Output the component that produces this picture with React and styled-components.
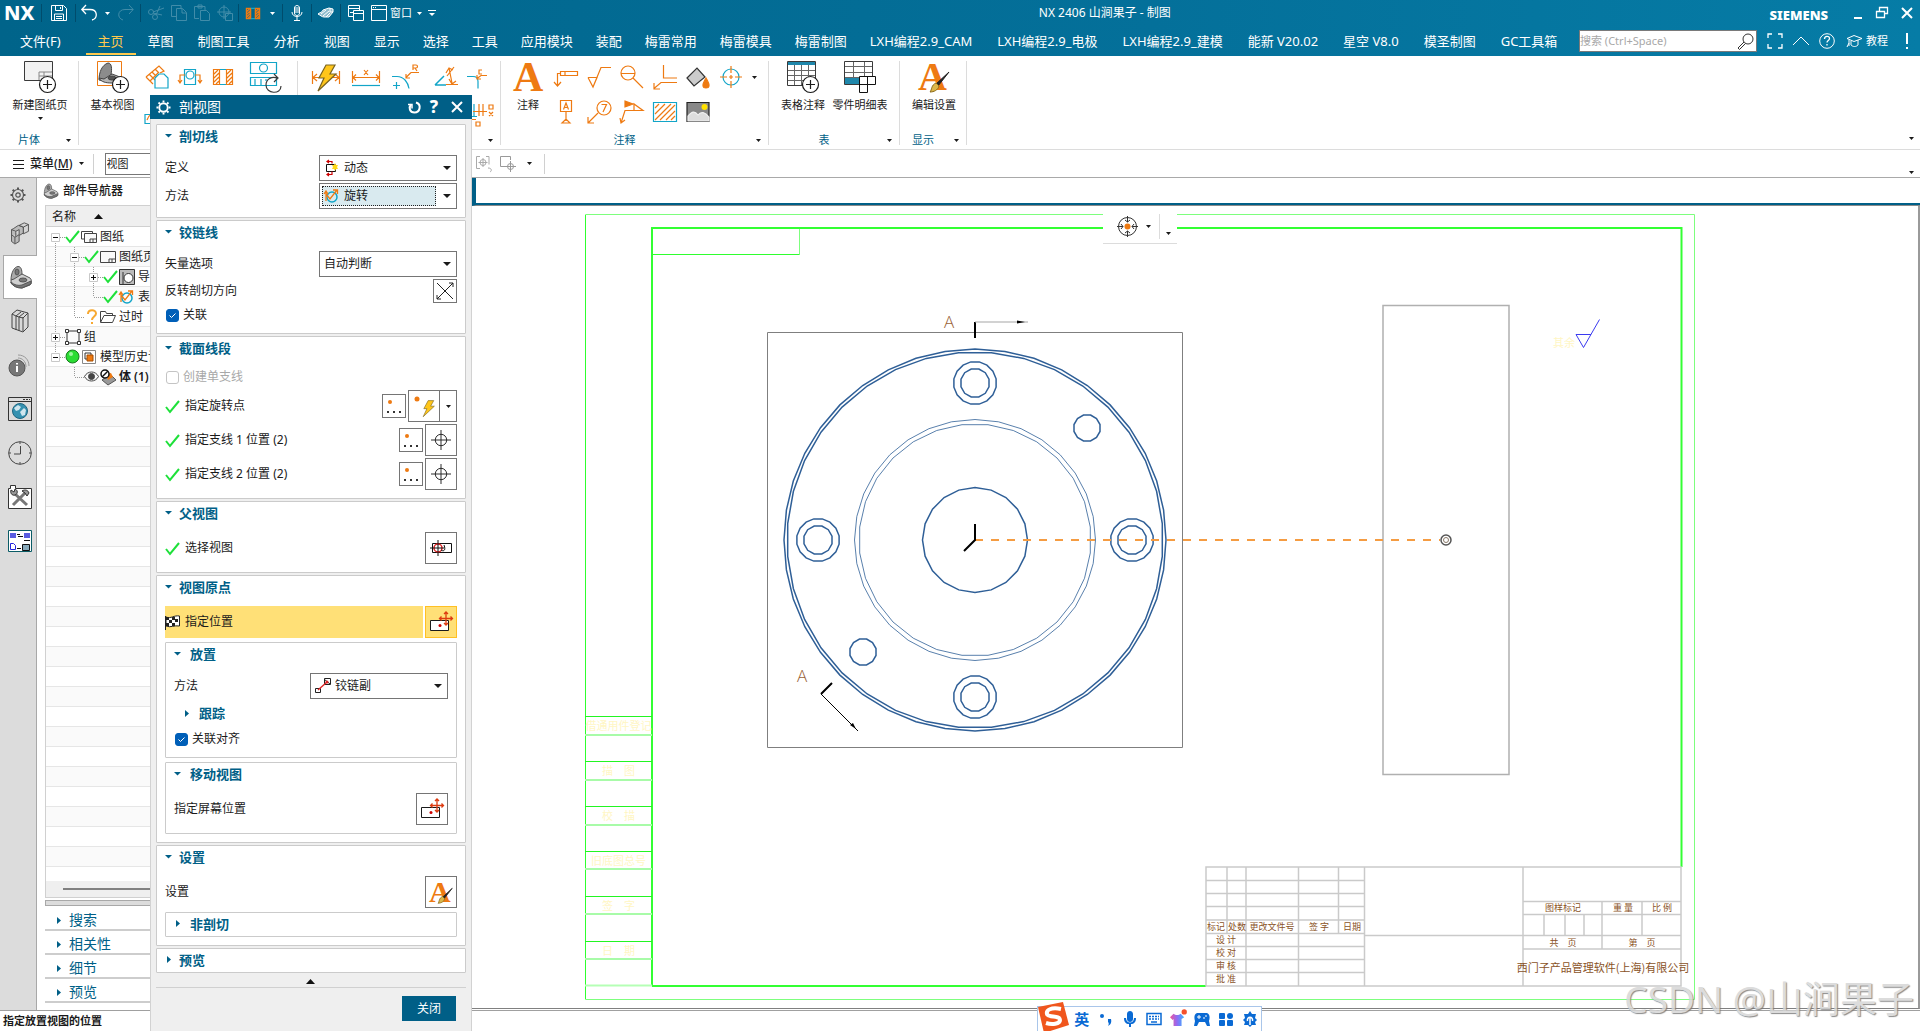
import React, { useState } from 'react';
import styled, { createGlobalStyle } from 'styled-components';

const BLUE = '#005f87';
const ORANGE = '#ee7a12';
const CYAN = '#12a5c8';
const DARK = '#3a3a3a';

const GlobalStyle = createGlobalStyle`
  * {
    box-sizing: border-box;
  }

  body {
    margin: 0;
    overflow: hidden;
    background: #fff;
    color: #1a1a1a;
    font-family: 'Noto Sans', 'Noto Sans CJK SC', sans-serif;
    font-size: 12px;
    line-height: 16px;
  }

  button, input, select {
    font: inherit;
    color: inherit;
  }

  svg {
    display: block;
    flex: none;
    overflow: visible;
  }
`;

const Page = styled.div`
  display: flex;
  flex-direction: column;
  height: 100vh;
  position: relative;
`;

const PlainButton = styled.button`
  display: flex;
  align-items: center;
  justify-content: center;
  flex: none;
  padding: 0;
  border: none;
  background: none;
  cursor: pointer;
`;

/* ---------- header ---------- */

const Header = styled.header`
  height: 56px;
  color: #fff;
  background: linear-gradient(90deg, #00648a, #04709a 60%, #067ca6);
`;

const TitleBar = styled.div`
  display: flex;
  align-items: center;
  height: 26px;
`;

const Brand = styled.div`
  width: 41px;
  padding-left: 4px;
  font: 800 20px/24px 'Noto Sans', sans-serif;
`;

const TitleSep = styled.span`
  width: 1px;
  height: 18px;
  background: #004c6c;
  margin-left: ${({ $before }) => $before || 0}px;
  margin-right: ${({ $after }) => $after || 0}px;
`;

const TitleTool = styled(PlainButton)`
  width: ${({ $w }) => $w || 28}px;
  height: 24px;
  opacity: ${({ disabled }) => (disabled ? 0.25 : 1)};
`;

const TitleText = styled.h1`
  flex: 1;
  margin: 0;
  text-align: center;
  font-size: 12px;
  font-weight: 400;
`;

const WindowLabel = styled.span`
  font-size: 11px;
  margin-right: 2px;
`;

const Siemens = styled.span`
  font: 900 13px/16px 'Noto Sans', sans-serif;
  margin-right: 18px;
  padding-top: 3px;
`;

const MenuBar = styled.nav`
  display: flex;
  align-items: center;
  height: 30px;
  font-size: 13px;
`;

const tabPadding = {
  file: '0 25px 0 20px',
  core: '0 12px',
  app: '0 11px 0 12px',
  addon: '0 13px 0 12px',
};

const MenuTab = styled.a`
  height: 28px;
  line-height: 28px;
  padding: ${({ $kind }) => tabPadding[$kind]};
  color: ${({ $active }) => ($active ? '#ffc94d' : '#fff')};
  border-bottom: 2px solid ${({ $active }) => ($active ? '#ffc94d' : 'transparent')};
  text-decoration: none;
  white-space: nowrap;
`;

const SearchBox = styled.label`
  display: flex;
  align-items: center;
  width: 178px;
  height: 22px;
  margin-left: auto;
  margin-right: 5px;
  padding-right: 2px;
  background: #fff;
  border: 1px solid #7a7a7a;
`;

const SearchInput = styled.input`
  flex: 1;
  min-width: 0;
  padding: 0;
  border: none;
  outline: none;
  background: none;
  font-size: 11px;

  &::placeholder {
    color: #a8a8a8;
    opacity: 1;
  }
`;

const MenuTool = styled(PlainButton)`
  width: ${({ $w }) => $w || 26}px;
  gap: 4px;
  height: 26px;
  font-size: 11px;
`;

/* ---------- ribbon ---------- */

const Ribbon = styled.section`
  display: flex;
  flex: none;
  height: 94px;
  padding: 5px 0 4px;
  border-bottom: 1px solid #dcdcdc;
`;

const GroupBox = styled.div`
  display: flex;
  flex-direction: column;
  flex: none;
  width: ${({ $w }) => $w}px;
  border-right: 1px solid #dcdcdc;
`;

const GroupBody = styled.div`
  display: flex;
  flex: none;
  height: 71px;
  padding-left: ${({ $pad }) => $pad || 0}px;
`;

const GroupFoot = styled.div`
  display: flex;
  align-items: center;
  flex: none;
  height: 16px;
  font-size: 11px;
  color: ${BLUE};

  span {
    flex: 1;
    text-align: center;
  }
`;

const FootButton = styled(PlainButton)`
  width: 20px;
`;

const MoreButton = styled(PlainButton)`
  width: 14px;
`;

const BigTool = styled(PlainButton)`
  flex-direction: column;
  justify-content: flex-start;
  width: ${({ $w }) => $w}px;
  font-size: 11px;
  line-height: 14px;
  white-space: nowrap;

  span {
    margin: 5px 0;
  }
`;

const ToolGrid = styled.div`
  display: grid;
  grid-template-columns: repeat(${({ $cols }) => $cols}, ${({ $cell }) => $cell || 33}px);
  grid-auto-rows: 32px;
  gap: 3px 0;
`;

const RibbonEnd = styled.div`
  display: flex;
  flex: 1;
  align-items: flex-end;
  justify-content: flex-end;
  padding: 0 6px 5px 0;
`;

const SelectionBar = styled.div`
  display: flex;
  align-items: center;
  flex: none;
  height: 28px;
  border-bottom: 1px solid #a9a9a9;
`;

const MenuButton = styled(PlainButton)`
  gap: 6px;
  padding: 0 9px 0 13px;
  height: 20px;
  border-right: 1px solid #d0d0d0;

  span {
    font-weight: 500;
  }
`;

const FilterSelect = styled.select`
  width: 362px;
  height: 22px;
  margin: 0 5px 0 11px;
  padding: 0 1px;
  border: 1px solid #777;
  background: #fff;
  font-size: 11px;
  appearance: none;
`;

const BarTool = styled(PlainButton)`
  width: ${({ $w }) => $w || 24}px;
`;

const BarEnd = styled.div`
  display: flex;
  flex: 1;
  height: 20px;
  margin-left: 4px;
  padding-right: 6px;
  border-left: 1px solid #d0d0d0;
  align-items: flex-end;
  justify-content: flex-end;
`;

/* ---------- left side ---------- */

const Work = styled.div`
  display: flex;
  flex: 1;
  min-height: 0;
`;

const Rail = styled.aside`
  flex: none;
  width: 37px;
  background: #dcdcdc;
  border-right: 1px solid #a8a8a8;
`;

const RailButton = styled(PlainButton)`
  width: 36px;
  height: ${({ $short }) => ($short ? 33 : 44)}px;
  padding-left: ${({ $short }) => ($short ? 0 : 3)}px;

  ${({ $active }) => $active && `
    width: 34px;
    padding: 0;
    margin-left: 3px;
    background: #fff;
    border: 1px solid #a8a8a8;
    border-right: none;
  `}
`;

const Navigator = styled.section`
  display: flex;
  flex-direction: column;
  flex: none;
  width: 435px;
  padding: 0 6px 7px 8px;
`;

const NavTitle = styled.h2`
  display: flex;
  align-items: center;
  gap: 4px;
  flex: none;
  height: 27px;
  margin: 0 0 0 -2px;
  padding-bottom: 1px;
  font-size: 12px;
  font-weight: 500;
`;

const TreeFrame = styled.div`
  display: flex;
  flex-direction: column;
  flex: 1;
  min-height: 0;
  border: 1px solid #d0d0d0;
`;

const TreeHead = styled.div`
  display: flex;
  align-items: center;
  gap: 18px;
  flex: none;
  height: 21px;
  padding: 1px 0 0 6px;
  background: #efefef;
  border-bottom: 1px solid #d0d0d0;
`;

const TreeList = styled.ul`
  flex: 1;
  min-height: 0;
  overflow: hidden;
  margin: 0;
  padding: 0;
  list-style: none;
`;

const TreeRow = styled.li`
  display: flex;
  align-items: center;
  height: 20px;
  border-bottom: 1px solid #e6e6e6;
  white-space: nowrap;
  font-weight: ${({ $bold }) => ($bold ? 600 : 400)};

  &:nth-child(even) {
    background: #fafafa;
  }

  span {
    margin-left: 3px;
  }
`;

const MarkCell = styled.div`
  width: 16px;
`;

const TreeScroll = styled.div`
  flex: none;
  height: 16px;
  padding: 7px 0 0 17px;
  background: #efefef;

  div {
    width: 280px;
    height: 2px;
    background: #808080;
  }
`;

const Splitter = styled.div`
  flex: none;
  height: 6px;
  margin: 2px 0 1px;
  background: #dcdcdc;
  border: 1px solid #a8a8a8;
`;

const NavSection = styled(PlainButton)`
  justify-content: flex-start;
  gap: 7px;
  height: 24px;
  padding: 4px 0 0 10px;
  border-bottom: 2px solid #cdcdcd;
  color: ${BLUE};
  font-size: 14px;
`;

/* ---------- graphics area ---------- */

const Graphics = styled.main`
  display: flex;
  flex-direction: column;
  flex: 1;
  min-width: 0;
  position: relative;
`;

const SheetTabs = styled.div`
  flex: none;
  height: 28px;
  border-left: 4px solid ${BLUE};
  border-bottom: 1px solid #8a8a8a;
  box-shadow: inset 0 -2px 0 ${BLUE};
`;

const Sheet = styled.div`
  flex: 1;
  min-height: 0;
  margin-bottom: 1px;
  border-bottom: 1px solid #808080;
  border-right: 2px solid #9a9a9a;

  > svg {
    width: 100%;
    height: 100%;
  }
`;

const SnapBar = styled.div`
  position: absolute;
  top: 28px;
  left: 50%;
  display: flex;
  align-items: center;
  gap: 8px;
  width: 74px;
  height: 38px;
  margin-left: -93px;
  padding: 4px 0 0 14px;
  background: #fff;
  border-bottom: 1px solid #dcdcdc;
`;

const SnapMore = styled(PlainButton)`
  align-items: flex-end;
  width: 14px;
  height: 25px;
  padding: 0 0 4px 3px;
  border-left: 1px solid #dcdcdc;
`;

const StatusBar = styled.footer`
  display: flex;
  align-items: center;
  flex: none;
  height: 21px;
  padding-left: 3px;
  border-top: 1px solid #a0a0a0;
  font-size: 11px;
  font-weight: 600;
`;

const Watermark = styled.div`
  position: absolute;
  right: 6px;
  bottom: 8px;
  font-size: 37px;
  line-height: 48px;
  color: #d6d6d6;
  text-shadow: 1px 1px 1px #777;
  opacity: 0.85;
  white-space: nowrap;
`;

const ImeBar = styled.div`
  position: absolute;
  left: 54%;
  bottom: 0;
  display: flex;
  align-items: center;
  gap: 8px;
  height: 25px;
  padding-right: 3px;
  background: #fff;
  border: 1px solid #a9c6ea;
  border-bottom: none;
  color: #0a6ad4;
`;

const ImeLang = styled.span`
  width: 16px;
  font-size: 15px;
  font-weight: 700;
  text-align: center;
`;

const ImeLogo = styled.svg`
  margin: -4px -3px 0 -1px;
`;

/* ---------- dialog ---------- */

const Dialog = styled.form`
  position: absolute;
  left: 150px;
  top: 95px;
  bottom: 0;
  display: flex;
  flex-direction: column;
  width: 322px;
  background: #efefef;
`;

const DialogTitle = styled.div`
  display: flex;
  align-items: center;
  flex: none;
  gap: 4px;
  height: 24px;
  padding: 0 6px;
  color: #fff;
  background: ${BLUE};
  font-size: 14px;

  h2 {
    flex: 1;
    margin: 0 0 0 4px;
    font-size: 14px;
    font-weight: 400;
  }
`;

const TitleIcon = styled(PlainButton)`
  width: ${({ $w }) => $w || 18}px;
  font-size: 17px;
  font-weight: 800;
`;

const DialogBody = styled.div`
  display: flex;
  flex-direction: column;
  flex: 1;
  gap: 2px;
  padding: 5px 5px 0;
  border: 1px solid #d2d2d2;
  border-width: 0 1px;
`;

const Panel = styled.section`
  border: 1px solid #cbcbcb;
  border-radius: 1px;
  background: #fff;
`;

const PanelHead = styled(PlainButton)`
  justify-content: flex-start;
  width: 100%;
  height: ${({ $inner }) => ($inner ? 26 : 23)}px;
  padding: 0 0 2px ${({ $inner }) => ($inner ? 9 : 8)}px;
  color: ${BLUE};
  font-size: 13px;
  font-weight: 700;

  svg {
    width: 7px;
    margin-right: ${({ $sub }) => ($sub ? 9 : 7)}px;
  }
`;

const PanelBody = styled.div`
  display: flex;
  flex-direction: column;
  gap: 2px;
  padding: 7px 8px 8px;

  > section {
    margin-top: 2px;
  }
`;

const Field = styled.div`
  display: flex;
  align-items: center;
  gap: 2px;
`;

const FieldLabel = styled.label`
  flex: 1;
`;

const PickLabel = styled.span`
  display: flex;
  align-items: center;
  flex: 1;
  gap: 5px;
  height: 32px;
  background: ${({ $active }) => ($active ? '#ffe077' : 'none')};
`;

const SelectFrame = styled.div`
  display: flex;
  align-items: center;
  width: 138px;
  height: 26px;
  padding: 2px 5px 2px 2px;
  border: 1px solid #757575;
  background: #fff;
`;

const SelectFace = styled.div`
  display: flex;
  align-items: center;
  gap: 4px;
  flex: 1;
  height: 20px;
  margin-right: 7px;
  padding-left: 1px;
  border: 1px dotted ${({ $focused }) => ($focused ? '#222' : 'transparent')};
  background: ${({ $focused }) => ($focused ? '#d9eaef' : 'none')};
`;

const NativeSelect = styled.select`
  flex: 1;
  min-width: 0;
  padding: 0;
  border: none;
  outline: none;
  background: none;
  appearance: none;
`;

const CheckLabel = styled.label`
  display: flex;
  align-items: center;
  gap: 4px;
  height: 20px;
  padding-left: 1px;
  color: ${({ $off }) => ($off ? '#a8a8a8' : 'inherit')};

  &:not(:last-child) {
    margin-bottom: 1px;
  }
`;

const CheckInput = styled.input`
  width: 13px;
  height: 13px;
  margin: 0;
  appearance: none;
  border: 1px solid #c4c4c4;
  border-radius: 3px;
  background: #fff;

  &:checked {
    border-color: #005fb8;
    background: #005fb8 url("data:image/svg+xml,%3Csvg xmlns='http://www.w3.org/2000/svg' viewBox='0 0 11 11'%3E%3Cpath d='M2.500 5.500l2 2 4-4' fill='none' stroke='white'/%3E%3C/svg%3E");
  }
`;

const SmallButton = styled(PlainButton)`
  width: 24px;
  height: 24px;
  border: 1px solid #757575;
  background: #fff;
`;

const LargeButton = styled(SmallButton)`
  width: 32px;
  height: 32px;
  ${({ $active }) => $active && `
    background: #ffe077;
    border-color: #ffc024;
  `}
`;

const SplitArrow = styled(LargeButton)`
  width: 18px;
  margin-left: -3px;
`;

const DialogFoot = styled.div`
  display: flex;
  flex-direction: column;
  align-items: flex-end;
  padding-top: 3px;
`;

const Collapse = styled(PlainButton)`
  width: 100%;
  height: 10px;
  padding: 0 2px 2px 0;
  border-bottom: 1px solid #d0d0d0;
`;

const CloseButton = styled(PlainButton)`
  width: 54px;
  height: 25px;
  margin: 8px 10px 0 0;
  background: ${BLUE};
  color: #fff;
`;

/* ---------- icons ---------- */

const Ico = ({ w = 16, h, vb, children, stroke = 'currentColor', fill = 'none', ...rest }) => (
  <svg width={w} height={h || w} viewBox={vb || `0 0 ${w} ${h || w}`} stroke={stroke} fill={fill} aria-hidden='true' {...rest}>
    {children}
  </svg>
);

const Caret = ({ color = '#1a1a1a', wide }) => (
  <Ico w={wide ? 8 : 5} h={wide ? 4 : 3} vb='0 0 8 4' fill={color} stroke='none' preserveAspectRatio='none'>
    <path d='M0 0h8L4 4z' />
  </Ico>
);

const CaretUp = () => (
  <Ico w={9} h={5} fill='#111' stroke='none'><path d='M0 5h9L4.500 0z' /></Ico>
);

const Twisty = ({ open }) => (
  <Ico w={7} h={7} fill={BLUE} stroke='none'>
    <path d={open ? 'M0 2h7L3.500 5.500z' : 'M2 0v7l4-3.500z'} />
  </Ico>
);

const Check = () => (
  <Ico w={15} h={13} stroke='#1ee03a' strokeWidth='2'><path d='M1 7l4 5L14 1' /></Ico>
);

const PlusBadge = () => (
  <g stroke='#1a1a1a' strokeWidth='1.200'>
    <circle cx='23.500' cy='23.500' r='8' fill='#fff' />
    <path d='M23.500 19v9M19 23.500h9' />
  </g>
);

const Bracket = ({ w = 16 }) => (
  <Ico w={w} vb='0 0 24 24' stroke='#555'>
    <path d='M2 15C2 8 5 2 9 1.500c3 0 4 3 4 8l-2 4-6 4z' fill='#aaa' />
    <path d='M2 15l3-1 8-5 8 4c2 2 2 5 0 7l-8 3c-5 0-9-2-11-5z' fill='#d0d0d0' />
    <path d='M2 17c3 3 7 4 11 3l9-4v3l-9 4c-5 0-9-2-11-5z' fill='#777' />
    <ellipse cx='14' cy='15' rx='4' ry='2' fill='#777' />
    <ellipse cx='8' cy='7' rx='2' ry='3' fill='#777' />
  </Ico>
);

const SectionGlyph = ({ w = 14 }) => (
  <Ico w={w} h={w === 14 ? 11 : 16} vb='0 0 20 16' stroke={ORANGE} strokeWidth={w === 14 ? 2 : 1.2}>
    <path d='M.5.5h6v15h-6zM13.500.5h6v15h-6zM1 5l4-4M1 9l5-5M1 13l5-5M3 15l3-3M14 5l4-4M14 9l5-5M14 13l5-5M16 15l3-3' />
    <path d='M7 .5h6M7 15.500h6' stroke={CYAN} />
  </Ico>
);

const RotateSection = () => (
  <Ico w={16}>
    <circle cx='8' cy='9' r='5' stroke={CYAN} strokeWidth='1.500' />
    <path d='M2 13V4M0 6l2-3 2 3M2 6l4 5 7-9M9 2h4.500v4' stroke={ORANGE} strokeWidth='1.300' />
  </Ico>
);

const SheetGlyph = ({ stack }) => (
  <Ico w={16} h={14} stroke='#444'>
    {stack && <path d='M3 9H.5V1.500h11V3' />}
    <path d={stack ? 'M3.500 3.500h12v9h-12z' : 'M.5 1.500h15v11H.5z'} fill='#fafafa' />
    <path d='M9 12V9h6M12 9v3' />
  </Ico>
);

const Placement = () => (
  <Ico w={22} vb='0 0 22 22' stroke='#1a1a1a'>
    <path d='M.5 9.500h18v10H.5z' fill='#fff' />
    <circle cx='10' cy='14.500' r='1.500' fill='#c00' stroke='none' />
    <g stroke='#dd3b10' strokeWidth='1.300'>
      <path d='M16 1v13M9.500 7.500h13M14 3l2-2 2 2M14 12l2 2 2-2M11.500 5.500l-2 2 2 2M20.500 5.500l2 2-2 2' />
    </g>
  </Ico>
);

const PointPicker = () => (
  <Ico w={18} stroke='none'>
    <circle cx='5' cy='5' r='2' fill={ORANGE} />
    <path d='M2 14h2v2H2zM8 14h2v2H8zM14 14h2v2h-2z' fill='#333' />
  </Ico>
);

const Crosshair = () => (
  <Ico w={20} vb='0 0 21 21' stroke='#222'><circle cx='10.500' cy='10.500' r='6' /><path d='M10.500 0v21M0 10.500h21' /></Ico>
);

const LetterBrush = ({ w = 32 }) => (
  <Ico w={w} vb='0 0 32 32'>
    <text x='0' y='29' fontFamily='Liberation Serif' fontSize='40' fontWeight='700' fill={ORANGE} stroke='none'>A</text>
    <path d='M31 11L18 23l2 2z' fill='#222' stroke='#222' />
    <path d='M18 22l3 3c-1 4-5 6-9 6 2-2 1-7 6-9z' fill='#dcb74a' stroke='#8a6b1c' />
  </Ico>
);

const Bolt = () => (
  <path d='M18 1h9l-5 9h6L10 27l6-13h-5z' fill='#ffc61a' stroke='#7a6420' />
);

const Gear = ({ w = 16, color = '#555', bold }) => (
  <Ico w={w} vb='0 0 16 16' stroke={color} strokeWidth={bold ? 2 : 1.2}>
    <circle cx='8' cy='8' r={bold ? 4.5 : 5.5} />
    {!bold && <circle cx='8' cy='8' r='2.200' />}
    <path d='M8 .5v2M8 13.500v2M.5 8h2M13.500 8h2M2.700 2.700l1.500 1.500M11.800 11.800l1.500 1.500M2.700 13.300l1.500-1.500M11.800 4.200l1.500-1.500' strokeWidth='2' />
  </Ico>
);

/* ---------- tree ---------- */

const treeRows = [
  { id: 'drawing', guides: ['minusFirst'], mark: 'check', icon: 'sheets', label: '图纸' },
  { id: 'sheet', guides: ['line', 'minus'], mark: 'check', icon: 'sheet', label: '图纸页' },
  { id: 'view', guides: ['line', 'line', 'plus'], mark: 'check', icon: 'view', label: '导' },
  { id: 'surface', guides: ['line', 'line', 'elbow'], mark: 'check', icon: 'rotate', label: '表' },
  { id: 'old', guides: ['line', 'elbow'], mark: 'question', icon: 'folder', label: '过时' },
  { id: 'group', guides: ['plus'], icon: 'group', label: '组' },
  { id: 'history', guides: ['minusLast'], mark: 'ball', icon: 'history', label: '模型历史记录' },
  { id: 'body', guides: ['none', 'elbow'], mark: 'eye', icon: 'body', label: '体 (1)', bold: true },
];

const Guide = ({ type }) => {
  const box = type.startsWith('minus') || type === 'plus';
  const down = type !== 'elbow' && type !== 'minusLast';
  return (
    <Ico w={19} h={20} stroke='#999'>
      {type !== 'none' && (
        <g strokeDasharray='1 1'>
          {type !== 'minusFirst' && <path d='M9.500 0v10' />}
          {down && <path d='M9.500 10v10' />}
          {type !== 'line' && <path d='M10 10.500h9' />}
        </g>
      )}
      {box && <path d='M5.500 6.500h8v8h-8z' fill='#fff' stroke='#c8c8c8' />}
      {box && <path d={type === 'plus' ? 'M7 10.500h5M9.500 8v5' : 'M7 10.500h5'} stroke='#111' />}
    </Ico>
  );
};

const Mark = ({ type }) => {
  if (type === 'check') return <Check />;
  if (type === 'question') return <Ico w={15} stroke='#f7a830' strokeWidth='2'><path d='M4 5c0-5 8-5 8-.5 0 3-4 3-4 6.500M8 13v2' /></Ico>;
  if (type === 'ball') return <Ico w={15} stroke='#157a1c'><circle cx='7.500' cy='7.500' r='6.500' fill='#2bdc34' /><circle cx='6' cy='5' r='2' fill='#9df5a0' stroke='none' /></Ico>;
  return <Ico w={15} stroke='#444'><path d='M.5 7.500c3-6 11-6 14 0-3 6-11 6-14 0z' /><circle cx='7.500' cy='7.500' r='3' fill='#444' /></Ico>;
};

const TreeIcon = ({ type }) => {
  switch (type) {
    case 'sheets': return <SheetGlyph stack />;
    case 'sheet': return <SheetGlyph />;
    case 'view': return <Ico w={16} stroke='#333'><path d='M.5.5h15v15H.5z' fill='#bbb' /><path d='M4 3v12' /><circle cx='9.500' cy='9' r='4.500' fill='#fff' /></Ico>;
    case 'rotate': return <RotateSection />;
    case 'folder': return <Ico w={16} stroke='#444'><path d='M.5 13V2.500h5l1 2h6V7M.5 13.500L4 6.500h11.500l-3 7z' /></Ico>;
    case 'group': return <Ico w={16} stroke='#333'><path d='M2 2h12v12H2z' /><path d='M.5.5h3v3h-3zM12.500.5h3v3h-3zM.5 12.500h3v3h-3zM12.500 12.500h3v3h-3z' fill='#fff' /></Ico>;
    case 'history': return <Ico w={16} stroke='#888'><path d='M1.500 1.500h13v13h-13z' /><path d='M4 4h6v6H4z' fill='#fff' stroke='#333' /><path d='M6 6h6v6H6z' fill={ORANGE} stroke='#a44c00' /></Ico>;
    default: return <Ico w={16} stroke='#555'><path d='M2 11l8-6 6 6-8 5z' fill='#999' /><path d='M6 5l5-1 2 4-5 3z' fill={ORANGE} stroke='none' /><circle cx='5' cy='5' r='4' fill='#fff' stroke='#111' strokeWidth='1.500' /><path d='M2 8l6-6' stroke='#111' strokeWidth='1.500' /></Ico>;
  }
};

const emptyRows = Array.from({ length: 25 }, (_, i) => i);

const PartNavigator = () => (
  <Navigator>
    <NavTitle><Bracket />部件导航器</NavTitle>
    <TreeFrame>
      <TreeHead>名称 <CaretUp /></TreeHead>
      <TreeList>
        {treeRows.map((row) => (
          <TreeRow key={row.id} $bold={row.bold}>
            {row.guides.map((guide, i) => <Guide key={i} type={guide} />)}
            {row.mark && <MarkCell><Mark type={row.mark} /></MarkCell>}
            <TreeIcon type={row.icon} />
            <span>{row.label}</span>
          </TreeRow>
        ))}
        {emptyRows.map((i) => <TreeRow key={i} />)}
      </TreeList>
      <TreeScroll><div /></TreeScroll>
    </TreeFrame>
    <Splitter />
    {['搜索', '相关性', '细节', '预览'].map((label) => (
      <NavSection key={label}><Twisty />{label}</NavSection>
    ))}
  </Navigator>
);

/* ---------- header parts ---------- */

const menuGroups = [
  { kind: 'file', tabs: ['文件(F)'] },
  { kind: 'core', tabs: ['主页', '草图', '制图工具', '分析', '视图'] },
  { kind: 'app', tabs: ['显示', '选择', '工具', '应用模块', '装配', '梅雷常用', '梅雷模具', '梅雷制图'] },
  { kind: 'addon', tabs: ['LXH编程2.9_CAM', 'LXH编程2.9_电极', 'LXH编程2.9_建模', '能新 V20.02', '星空 V8.0', '模圣制图', 'GC工具箱'] },
];

const AppHeader = () => {
  const [active, setActive] = useState('主页');

  return (
    <Header>
      <TitleBar>
        <Brand>NX</Brand>
        <TitleSep />
        <TitleTool $w={33} title='保存'><Ico><path d='M.5.5h12l3 3v12H.5zM4.500.5v5h7v-5M9.500 2v2M3.500 15v-6h9v6M5 11.500h6M5 13.500h6' /></Ico></TitleTool>
        <TitleSep />
        <TitleTool $w={26} title='撤消'><Ico strokeWidth='1.300'><path d='M5 0L.8 4.500 5 9M1 4.500h8c8 0 8 9 2 10.500' /></Ico></TitleTool>
        <TitleTool $w={10}><Caret color='#fff' /></TitleTool>
        <TitleTool disabled><Ico><path d='M11 0l4.200 4.500L11 9M15 4.500H7c-8 0-8 9-2 10.500' /></Ico></TitleTool>
        <TitleSep $after={3} />
        <TitleTool $w={23} disabled><Ico><circle cx='3' cy='7' r='2.500' /><circle cx='7' cy='12' r='2.500' /><path d='M5 7l11-4M8 10l4-9M5 8l9 2' /></Ico></TitleTool>
        <TitleTool $w={23} disabled><Ico><path d='M10 3V.5H.5v11H5M5.500 3.500h6l4 4v8h-10zM11 4v4h4' /></Ico></TitleTool>
        <TitleTool $w={23} disabled><Ico><path d='M5 13.500H.5v-12H11V5M4 0h4v3H4zM6.500 5.500h6l3 3v7h-9z' /></Ico></TitleTool>
        <TitleTool $w={23} disabled><Ico><circle cx='7' cy='7' r='5' /><path d='M7 0v14M0 7h14M8.500 8.500h7v7h-7z' /></Ico></TitleTool>
        <TitleSep $before={2} />
        <TitleTool title='剖视图'><SectionGlyph /></TitleTool>
        <TitleTool $w={10}><Caret color='#fff' /></TitleTool>
        <TitleSep $before={5} />
        <TitleTool title='语音'><Ico><path d='M5.500 3c0-3.300 5-3.300 5 0v5c0 3.300-5 3.300-5 0zM6 3h4M6 5h4M6 7h4M3 7c0 6 10 6 10 0M8 12v3.500M5 15.500h6' /></Ico></TitleTool>
        <TitleSep />
        <TitleTool title='触控'><Ico><path d='M0 9c2-2 4-1 5-4l6-2 4 1v3l-4 5H6c-2 0-4-2-6-3z' fill='#8fbccd' /><path d='M3 9l5-4M5 11l6-5M8 12l4-4M12 3v4h3' /></Ico></TitleTool>
        <TitleSep $after={3} />
        <TitleTool $w={23}><Ico><path d='M5 11.500H.5v-11h11V5M.5 3.500h11M5.500 5.500h10v10h-10zM5.500 8.500h10M5 7.500H2' /></Ico></TitleTool>
        <TitleTool $w={23}><Ico><path d='M.5.5h15v15H.5zM.5 4.500h15M2 2.500h1M4 2.500h1' /></Ico></TitleTool>
        <WindowLabel>窗口</WindowLabel>
        <TitleTool $w={10}><Caret color='#fff' /></TitleTool>
        <TitleTool $w={16}><Ico w={8} h={7} fill='#fff'><path d='M0 .5h8' /><path d='M1 3h6L4 6z' stroke='none' /></Ico></TitleTool>
        <TitleText>NX 2406 山涧果子 - 制图</TitleText>
        <Siemens>SIEMENS</Siemens>
        <TitleTool $w={24} title='最小化'><Ico w={10} h={12} strokeWidth='2'><path d='M1 11h8' /></Ico></TitleTool>
        <TitleTool $w={24} title='还原'><Ico w={12} h={12}><path d='M3.500 4V.5h8v6H9M.5 4.500h8v6h-8z' strokeWidth='1.300' /></Ico></TitleTool>
        <TitleTool $w={26} title='关闭'><Ico w={12} h={12} strokeWidth='2'><path d='M1 1l10 10M11 1L1 11' /></Ico></TitleTool>
      </TitleBar>
      <MenuBar>
        {menuGroups.map(({ kind, tabs }) => tabs.map((tab) => (
          <MenuTab key={tab} href='#' $kind={kind} $active={tab === active} onClick={() => setActive(tab)}>{tab}</MenuTab>
        )))}
        <SearchBox>
          <SearchInput type='text' placeholder='搜索 (Ctrl+Space)' />
          <Ico w={17} stroke='#333'><circle cx='11' cy='6' r='5' /><path d='M7 9l-6 6 1.500 1.500 6-6' /></Ico>
        </SearchBox>
        <MenuTool title='全屏'><Ico strokeWidth='1.300'><path d='M1 5V1h4M11 1h4v4M15 11v4h-4M5 15H1v-4' /></Ico></MenuTool>
        <MenuTool title='最小化功能区'><Ico><path d='M0 12l8-8 8 8' /></Ico></MenuTool>
        <MenuTool title='帮助'><Ico><circle cx='8' cy='8' r='7.300' /><path d='M5.500 6c0-3.500 5-3.500 5-.500 0 2-2.500 2-2.500 4M8 11v1.500' strokeWidth='1.300' /></Ico></MenuTool>
        <MenuTool $w={54}>
          <Ico><path d='M1 5.500l7-3 8 3-8 3zM3 7v6M5 8v4c2 2 5 2 7 0V7M1 14l2-4' /></Ico>
          教程
        </MenuTool>
        <MenuTool title='提示'><Ico w={4} h={16} strokeWidth='2'><path d='M2 0v11M2 14v2' /></Ico></MenuTool>
      </MenuBar>
    </Header>
  );
};

/* ---------- ribbon parts ---------- */

const RibbonGroup = ({ width, label, pad, children }) => (
  <GroupBox $w={width}>
    <GroupBody $pad={pad}>{children}</GroupBody>
    <GroupFoot>
      <span>{label}</span>
      <FootButton><Caret /></FootButton>
    </GroupFoot>
  </GroupBox>
);

const Tool = ({ children, w = 24, vb }) => (
  <PlainButton><Ico w={w} h={24} vb={vb} stroke={ORANGE} strokeWidth='1.200'>{children}</Ico></PlainButton>
);

const AppRibbon = () => (
  <Ribbon>
    <RibbonGroup width={79} label='片体'>
      <BigTool $w={80}>
        <Ico w={32} stroke={DARK}>
          <path d='M.5.5h28v19H.5z' fill='#f2f2f2' />
          <path d='M15 19v-8h13M15 15h13M20 11v8' stroke='#888' />
          <PlusBadge />
        </Ico>
        <span>新建图纸页</span>
        <Caret />
      </BigTool>
    </RibbonGroup>
    <RibbonGroup width={219} pad={6}>
      <BigTool $w={55}>
        <Ico w={32} stroke={ORANGE}>
          <path d='M.5.5h24v24H.5z' />
          <g stroke='#444'>
            <path d='M2 19c0-8 3-15 9-17 4 0 4 6 3 12l-7 6z' fill='#8c8c8c' />
            <path d='M2 17l5 1 8-5 8 3c1 3-2 5-8 6-6 0-11-1-13-5z' fill='#b5b5b5' />
            <ellipse cx='15' cy='17' rx='4' ry='2' fill='#555' />
          </g>
          <PlusBadge />
        </Ico>
        <span>基本视图</span>
      </BigTool>
      <ToolGrid $cols={3}>
        <Tool><path d='M1 12L14 1l5 5-4 2M1 12l7 7M4 9l6 6M7 7l5 5M10 4l4 4M5 16l8-8' /><path d='M10 23V13l4-4h5l4 4v10z' stroke={CYAN} fill='#fff' /></Tool>
        <Tool><path d='M6.500 4.500h11v15h-11z' stroke={CYAN} /><circle cx='12' cy='10' r='4' stroke={CYAN} /><path d='M7 10H2v8M17 10h5v8M0 15l2 3 2-3M20 15l2 3 2-3' /></Tool>
        <PlainButton><SectionGlyph w={20} /></PlainButton>
        <Tool><path d='M0 14.500h16v9H0z' stroke={CYAN} /><path d='M2 20c2-6 5-6 8-6' /></Tool>
      </ToolGrid>
      <BigTool $w={54} title='更新视图'>
        <Ico w={32} stroke={CYAN} strokeWidth='1.200'>
          <path d='M.5 1.500h26v11H.5zM.5 16.500h26v8H.5zM11 18v6M16 18v2M5 18v6' />
          <circle cx='13.500' cy='7' r='4' />
          <path d='M31 25c0 9-15 8-15-1 0-6 6-9 11-7M24 13l4 4-4 4' stroke={DARK} />
        </Ico>
      </BigTool>
    </RibbonGroup>
    <RibbonGroup width={203} pad={8}>
      <ToolGrid $cols={5} $cell={40}>
        <Tool w={28} vb='0 0 28 24'><path d='M.5 6v13M27.500 6v13M1 12.500h26M5 9l-4 3.500L5 16M23 9l4 3.500-4 3.500' /><g transform='translate(-4 -1)'><Bolt /></g></Tool>
        <Tool w={28} vb='0 0 28 24'><path d='M.5 6v12M27.500 6v12M1 12.500h26M4 9.500l-3 3 3 3M24 9.500l3 3-3 3M12 5l4 5M16 5l-4 5' /><path d='M0 20.500h28' stroke={CYAN} /></Tool>
        <Tool w={28} vb='0 0 28 24'><path d='M20 6V1h3c2 0 2 3 0 3h-3M22 4l2 3M18 8.500h8M18 8.500l-5 5M13 10v4h4' transform='translate(1 -1)' /><path d='M0 11.500h5c7 0 11 6 12 12M1 20.500h7M4.500 17v7' stroke={CYAN} /></Tool>
        <Tool><path d='M1 20h11M1 20l9-9' stroke={CYAN} strokeWidth='1.500' /><path d='M13 11l7-9M15 3l3 15M12 8l3-5 4 2M15 14l3 5 4-3M12 19.500h12' /></Tool>
        <Tool vb='7 0 24 24'><path d='M0 11.500h6c4 0 5 2 5 5v7' stroke={CYAN} /><path d='M15 5h-3v4h3M20 10.500h-6l-4 3M10 10v4h4' /></Tool>
        <span /><span /><span /><span />
        <Tool vb='4 0 24 24'><path d='M0 16.500h7M4 4v12' stroke={CYAN} /><path d='M3 11.500h14M9 4v12M13 4v12M19 5h4v4h-4zM19 12l4 4M23 12l-4 4M0 19.500h6M6 22h4v4H6z' /></Tool>
      </ToolGrid>
    </RibbonGroup>
    <RibbonGroup width={268} pad={6} label='注释'>
      <BigTool $w={42}>
        <Ico w={32}><text x='1' y='30' fontFamily='Liberation Serif' fontSize='42' fontWeight='700' fill={ORANGE} stroke='none'>A</text></Ico>
        <span>注释</span>
      </BigTool>
      <ToolGrid $cols={7}>
        <Tool><path d='M3.500 21V8.500h3M0 17l3.500 4L7 17M6.500 6.500h17v4h-17zM11 7v3' /></Tool>
        <Tool><path d='M1 12.500h9L6 22 1 12.500M6 22L14 2.500h10' /></Tool>
        <Tool><circle cx='8' cy='8' r='7' /><path d='M1 8.500h14M13 13l10 10' /></Tool>
        <Tool><path d='M10.500 0v13H24M24 17.500H8l-7 6M1 18v6h6' /></Tool>
        <Tool><path d='M1 13L11 3l8 9-11 9z' fill='#ccc' stroke='#333' /><path d='M20 13c5 8 3 10 0 10s-5-2 0-10z' fill={ORANGE} /></Tool>
        <Tool><circle cx='12' cy='12' r='8' stroke={CYAN} /><path d='M12 1v7M12 16v7M1 12h7M16 12h7M10 12h4M12 10v4' /></Tool>
        <MoreButton><Caret /></MoreButton>
        <Tool><path d='M6.500.5h11v11h-11zM12 12v9M8 23l4-4 4 4z' /><path d='M9.500 9.500L12 3l2.500 6.500M10 7.500h4' /></Tool>
        <Tool><circle cx='17' cy='8' r='7' /><path d='M14.500 4.500h5L16 12M11 13L1 23M1 17v6h6' /></Tool>
        <Tool><path d='M5 1v3M5 1l8 3-8 3z' fill={ORANGE} /><path d='M1 23L5 10.500h18L14 4v6M0 18l1 5 4-3' /></Tool>
        <Tool><path d='M.5 2.500h23v19H.5z' stroke={CYAN} /><path d='M2 8l4-4M2 14L12 4M2 20L18 4M7 20L22 5M13 20l9-9M18 20l4-4' /></Tool>
        <Tool><path d='M1 2.500h22v19H1z' fill='#888' stroke='#222' /><path d='M2 21V16c4-5 7-5 10-1 3-4 7-3 11 2v4z' fill='#ddd' stroke='#eee' /><circle cx='18.500' cy='7' r='3' fill='#ffe100' stroke='none' /></Tool>
      </ToolGrid>
    </RibbonGroup>
    <RibbonGroup width={131} pad={6} label='表'>
      <BigTool $w={56}>
        <Ico w={32} stroke='#666'>
          <path d='M.5.5h28v24H.5z' fill='#fff' stroke={DARK} />
          <path d='M1 1h27v3H1z' fill='#1f87ab' stroke='none' />
          <path d='M1 9.500h27M1 14.500h27M1 19.500h27M7.500 4v20M14.500 4v20M21.500 4v20' />
          <PlusBadge />
        </Ico>
        <span>表格注释</span>
      </BigTool>
      <BigTool $w={58}>
        <Ico w={32} stroke='#666'>
          <path d='M.5.5h28v23H.5z' fill='#fff' stroke={DARK} />
          <path d='M1 17h16v6H1z' fill='#1f87ab' stroke='none' />
          <path d='M1 5.500h27M1 11.500h27M1 16.500h27M9.500 1v16M20.500 1v16' />
          <path d='M15.500 15.500h16v8h-8v8h-8zM23.500 15.500v8h-8' fill='#fff' stroke='#111' />
        </Ico>
        <span>零件明细表</span>
      </BigTool>
    </RibbonGroup>
    <RibbonGroup width={67} label='显示'>
      <BigTool $w={68}>
        <LetterBrush />
        <span>编辑设置</span>
      </BigTool>
    </RibbonGroup>
    <RibbonEnd><Caret /></RibbonEnd>
  </Ribbon>
);

const SelectionRow = () => (
  <SelectionBar>
    <MenuButton>
      <Ico w={11} h={10}><path d='M0 1.500h11M0 5.500h11M0 9.500h11' /></Ico>
      <span>菜单(<u>M</u>)</span>
      <Caret />
    </MenuButton>
    <FilterSelect aria-label='选择过滤器'><option>视图</option></FilterSelect>
    <BarTool><Ico stroke='#aaa'><path d='M4 .5H.5v12H4M10 .5h3v8M7 2v9M2.500 6.500h9M12 12c4 0 4 3 2 4' /><circle cx='7' cy='6.500' r='3' /></Ico></BarTool>
    <BarTool><Ico stroke='#999'><path d='M5 10.500H.5V.5h10V4M10.500 5v11M5 10.500h11' /><circle cx='10.500' cy='10.500' r='3' /></Ico></BarTool>
    <BarTool $w={20}><Caret /></BarTool>
    <BarEnd><Caret /></BarEnd>
  </SelectionBar>
);

const LeftRail = () => (
  <Rail>
    <RailButton $short title='设置'><Gear /></RailButton>
    <RailButton title='装配导航器'>
      <Ico w={22} vb='0 0 22 26' stroke='#444'><path d='M3 8l6-4 6 2v7l-5 3v7l-5 3-4-3V9z' fill='#bbb' /><path d='M10 4l6-3 5 2v8l-6 3V6zM1 15l4 3 5-3M5 18v7M15 6l6-3M1 9l5 2 4-2v7M6 11v6' fill='#d5d5d5' /></Ico>
    </RailButton>
    <RailButton $active title='部件导航器'><Bracket w={24} /></RailButton>
    <RailButton title='重用库'><Ico w={20} h={24} stroke='#444'><path d='M2 5l5-4 11 3v14l-5 5L2 19zM2 5l4 2v14M6 7l5-4M6 7l3 1v14M9 8l5-4M13 8v14M9 8l4 1 5-5' fill='#d8d8d8' /></Ico></RailButton>
    <RailButton title='HD3D 工具'><Ico w={24}><circle cx='9' cy='15' r='8' fill='#777' stroke='#555' /><path d='M9 13v6M9 10v1.500' stroke='#fff' strokeWidth='2' /><path d='M10 5c4 0 8 3 8 9M10 2c7 0 11 5 11 11' stroke='#999' /></Ico></RailButton>
    <RailButton title='Web 浏览器'><Ico w={24} stroke='#333'><path d='M.5.5h23v23H.5zM.5 4.500h23M15 2.500h2M18 2.500h2M21 2.500h1' /><circle cx='12' cy='14' r='7.500' fill='#3591b0' stroke='#1d6580' /><path d='M6 11l4-3 3 2-2 3-3 1zM12 15l4-4 2 2-1 5-3 1z' fill='#cfe6ee' stroke='none' /></Ico></RailButton>
    <RailButton title='历史记录'><Ico w={24} stroke='#444'><circle cx='12' cy='12' r='11.300' /><path d='M12.500 5v8H6M12 1v2M12 21v2M1 12h2M21 12h2' /></Ico></RailButton>
    <RailButton title='工艺模板'><Ico w={24} stroke='#333'><path d='M.5 3.500h2v-3h5v3h16v20H.5z' fill='#fff' /><path d='M5 20L18 7M19 20L6 8' strokeWidth='3' stroke='#777' /><path d='M3 5l3 2 1-3c3 1 3 5 0 6-3 1-5-2-4-5zM14 6c3-2 6-1 7 2l-2 3-2-3z' fill='#999' /></Ico></RailButton>
    <RailButton title='角色'><Ico w={24} h={22} stroke='#111'><path d='M.5.5h23v21H.5z' fill='#fff' stroke='#0b5c66' /><path d='M2 3h6v5H2zM16 3h6v5h-6z' fill='#5a5ce0' stroke='none' /><path d='M9 4.500h3M10 6.500h5M16 10.500h6M9 18.500h4' /><path d='M2.500 13.500h3l2 2v4h-5z' stroke='#22d' /><path d='M14.500 14.500h7v6h-7z' fill='#8ab' /></Ico></RailButton>
  </Rail>
);

/* ---------- drawing ---------- */

const facets = (cx, cy, r, n, phase = 0) =>
  Array.from({ length: n }, (_, i) => {
    const a = ((i * 360) / n + phase - 90) * (Math.PI / 180);
    return `${(cx + r * Math.cos(a)).toFixed(1)},${(cy + r * Math.sin(a)).toFixed(1)}`;
  }).join(' ');

const bolts = [[975, 383], [818, 540], [1132, 540], [975, 697]];
const pins = [[1087, 428], [863, 652]];

const marginCells = [
  [716, 735, '借通用件登记'],
  [761, 780, '描　图'],
  [806, 825, '校　描'],
  [851, 869, '旧底图总号'],
  [896, 914, '签　字'],
  [941, 959, '日　期'],
];

const blockTexts = [
  [1216, 930, '标记'], [1237, 930, '处数'], [1272, 930, '更改文件号'], [1319, 930, '签 字'], [1352, 930, '日期'],
  [1226, 943, '设 计'], [1226, 956, '校 对'], [1226, 969, '审 核'], [1226, 982, '批 准'],
  [1563, 911, '图样标记'], [1623, 911, '重 量'], [1662, 911, '比 例'],
  [1563, 946, '共　页'], [1642, 946, '第　页'],
];

const Drawing = () => (
  <svg viewBox='472 206 1446 802' fill='none' fontFamily="'Noto Sans CJK SC', sans-serif">
    <g stroke='#7dff7d'>
      <path d='M585.500 214.500H1694.500V999.500H585.500z' />
      <path d='M799.500 229v25.500' />
    </g>
    <path d='M585.500 215V999M652 254.500H799.500' stroke='#2eff2e' />
    <path d='M652 986V228H1681.500V867M652 986H1206' stroke='#33ff33' strokeWidth='2' />
    <path d='M585 985.500h67' stroke='#b5ffb5' strokeWidth='2' />
    {marginCells.map(([top, bottom, label]) => (
      <g key={top}>
        <path d={`M585 ${top}.500h67`} stroke='#22f522' />
        <path d={`M585 ${bottom}h67`} stroke='#a8fba8' strokeWidth='2' />
        <text x='618.500' y={top + 14} fontSize='11' fill='#fff6c4' textAnchor='middle'>{label}</text>
      </g>
    ))}

    <g stroke='#cacaca' strokeWidth='1.500'>
      <path d='M1206 867H1681V986H1206zM1206 880.500h158M1206 893.500h158M1206 906.500h158M1206 920h158M1206 933.500h158M1206 946.500h158M1206 959.500h158M1206 972.500h158' />
      <path d='M1227 867v66M1246 867v119M1298.500 867v119M1338.500 867v66M1364.500 867v119M1523 867v119' />
      <path d='M1364 935.500h317M1523 901.500h158M1523 914.500h158M1523 949h158M1602 901v48M1642 901v35M1544 914v22M1565 914v22M1584 914v22' />
    </g>
    <g fill='#8a5327' fontSize='9' textAnchor='middle'>
      {blockTexts.map(([x, y, label]) => <text key={label} x={x} y={y}>{label}</text>)}
      <text x='1603' y='972' fontSize='11'>西门子产品管理软件(上海)有限公司</text>
    </g>

    <path d='M767.500 332.500h415v415h-415z' stroke='#7f7f7f' />
    <path d='M1383 305.500h126v469h-126z' stroke='#b0b0b0' strokeWidth='1.500' />
    <g stroke='#2f5f97' strokeWidth='1.500'>
      <polygon points={facets(975, 540, 191, 40)} />
      <polygon points={facets(975, 540, 188, 36, 5)} />
      <polygon points={facets(975, 540, 52.5, 20)} />
      {bolts.map(([x, y]) => (
        <g key={`${x}-${y}`}>
          <polygon points={facets(x, y, 21.5, 16, 11.25)} />
          <polygon points={facets(x, y, 14.5, 12, 15)} />
        </g>
      ))}
      {pins.map(([x, y]) => <polygon key={x} points={facets(x, y, 13.5, 12, 15)} />)}
    </g>
    <g stroke='#2f5f97' strokeWidth='.8'>
      <polygon points={facets(975, 540, 120.5, 32)} />
      <polygon points={facets(975, 540, 116, 28, 6.43)} />
    </g>
    <path d='M975 540H1440' stroke='#f59c42' strokeWidth='2' strokeDasharray='8 8' />
    <circle cx='1446' cy='540' r='5' stroke='#555' strokeWidth='1.500' />
    <circle cx='1446' cy='540' r='2.500' stroke='#8a7a6a' />

    <g stroke='#000' strokeWidth='2'>
      <path d='M975 322v16M975 524v16l-11 11M832 683l-11 11' />
      <path d='M821 694l37 37' strokeWidth='1' />
      <path d='M975 322h53' stroke='#a5a5a5' strokeWidth='1' />
    </g>
    <path d='M1017 320.500l8 1.500-8 1.500zM850 725l3-2 3 6z' fill='#000' />
    <g fontFamily="'Open Sans', 'Noto Sans', sans-serif" fontWeight='300' fontSize='17' fill='#9a6236' textAnchor='middle'>
      <text x='949' y='328'>A</text>
      <text x='802' y='682'>A</text>
    </g>

    <text x='1553' y='347' fontSize='11' fill='#fff6c4'>其余</text>
    <path d='M1591 334.500h-15l7.500 13 16-28' stroke='#3a3af0' />
  </svg>
);

/* ---------- dialog parts ---------- */

const Section = ({ title, children, sub, open = true }) => (
  <Panel>
    <PanelHead type='button' $sub={sub}><Twisty open={open} />{title}</PanelHead>
    {open && <PanelBody>{children}</PanelBody>}
  </Panel>
);

const SelectField = ({ id, label, value, icon, focused }) => (
  <Field>
    <FieldLabel htmlFor={id}>{label}</FieldLabel>
    <SelectFrame>
      <SelectFace $focused={focused}>
        {icon}
        <NativeSelect id={id} defaultValue={value}><option>{value}</option></NativeSelect>
      </SelectFace>
      <Caret wide />
    </SelectFrame>
  </Field>
);

const CheckField = ({ label, checked, disabled }) => {
  const [on, setOn] = useState(!!checked);
  return (
    <CheckLabel $off={disabled}>
      <CheckInput type='checkbox' checked={on} disabled={disabled} onChange={() => setOn(!on)} />
      {label}
    </CheckLabel>
  );
};

const SectionDialog = () => (
  <Dialog onSubmit={(e) => e.preventDefault()}>
    <DialogTitle>
      <Gear w={15} color='#fff' bold />
      <h2>剖视图</h2>
      <TitleIcon type='button' title='重置' $w={12}><Ico w={13} strokeWidth='2'><path d='M8 1.500c6 2 4 10-1.500 10-5 0-6-5-3.500-8' /><path d='M0 3.500h4v4' strokeWidth='1.500' /></Ico></TitleIcon>
      <TitleIcon type='button' title='帮助' $w={20}>?</TitleIcon>
      <TitleIcon type='button' title='关闭'><Ico w={12} strokeWidth='2'><path d='M1 1l10 10M11 1L1 11' /></Ico></TitleIcon>
    </DialogTitle>
    <DialogBody>
      <Section title='剖切线'>
        <SelectField
          id='definition'
          label='定义'
          value='动态'
          icon={<Ico w={16} stroke='#111'><path d='M2.500 4.500h9v7h-9z' /><path d='M4 1.500h4v2M4 14.500h4v-3M5 0L3 1.500 5 3M5 13l-2 1.500L5 16' stroke='#c00' strokeWidth='1.200' /><path d='M11 3l1 2h2l-1 2 1 2h-2l-1 2-1-2H8l1-2-1-2h2z' fill='#ffd91a' stroke='none' /></Ico>}
        />
        <SelectField id='method' label='方法' value='旋转' focused icon={<RotateSection />} />
      </Section>
      <Section title='铰链线'>
        <SelectField id='vector' label='矢量选项' value='自动判断' />
        <Field>
          <FieldLabel as='span'>反转剖切方向</FieldLabel>
          <SmallButton type='button' title='反转剖切方向'>
            <Ico w={18} stroke='#222'><path d='M1 1l16 16M17 1L1 17M17 5V1h-4M1 13v4h4' /></Ico>
          </SmallButton>
        </Field>
        <CheckField label='关联' checked />
      </Section>
      <Section title='截面线段'>
        <CheckField label='创建单支线' disabled />
        <Field>
          <PickLabel><Check />指定旋转点</PickLabel>
          <SmallButton type='button'><PointPicker /></SmallButton>
          <LargeButton type='button'>
            <Ico w={26} vb='0 0 26 26'><circle cx='6' cy='6' r='2.500' fill={ORANGE} stroke='none' /><g transform='translate(6 7) scale(.62)'><Bolt /></g></Ico>
          </LargeButton>
          <SplitArrow type='button'><Caret /></SplitArrow>
        </Field>
        {['指定支线 1 位置 (2)', '指定支线 2 位置 (2)'].map((label) => (
          <Field key={label}>
            <PickLabel><Check />{label}</PickLabel>
            <SmallButton type='button'><PointPicker /></SmallButton>
            <LargeButton type='button'><Crosshair /></LargeButton>
          </Field>
        ))}
      </Section>
      <Section title='父视图'>
        <Field>
          <PickLabel><Check />选择视图</PickLabel>
          <LargeButton type='button'>
            <Ico w={22} h={18} stroke='#111'><path d='M2.500 4.500h19v9h-19z' /><circle cx='8' cy='9' r='4' stroke='#d22' strokeWidth='1.500' /><path d='M8 1v16M0 9h14M11 11c3 2 5 0 3-5' /></Ico>
          </LargeButton>
        </Field>
      </Section>
      <Section title='视图原点'>
        <Field>
          <PickLabel $active>
            <Ico w={15} stroke='#222'><path d='M.5 1v14M1 2c5 2 8-2 13.500-1v10C9 10 6 13 1 11z' fill='#fff' /><path d='M1 2h3v3H1zM7 2h3v3H7zM4 5h3v3H4zM10 4h3v3h-3zM1 8h3v3H1zM7 8h3v3H7z' fill='#222' stroke='none' /></Ico>
            指定位置
          </PickLabel>
          <LargeButton type='button' $active><Placement /></LargeButton>
        </Field>
        <Section title='放置' sub>
          <SelectField
            id='placement'
            label='方法'
            value='铰链副'
            icon={<Ico w={16} stroke='#222'><path d='M9.500.5h6v6h-6zM.5 10.500h5v4h-5zM9 1l6 5' /><path d='M3 12l9-8' stroke='#d22' strokeWidth='1.300' /><circle cx='12' cy='4' r='1.500' fill='#d22' stroke='none' /></Ico>}
          />
          <PanelHead type='button' $inner $sub><Twisty />跟踪</PanelHead>
          <CheckField label='关联对齐' checked />
        </Section>
        <Section title='移动视图' sub>
          <Field>
            <FieldLabel as='span'>指定屏幕位置</FieldLabel>
            <LargeButton type='button' title='指定屏幕位置'><Placement /></LargeButton>
          </Field>
        </Section>
      </Section>
      <Section title='设置'>
        <Field>
          <FieldLabel as='span'>设置</FieldLabel>
          <LargeButton type='button' title='设置'><LetterBrush w={24} /></LargeButton>
        </Field>
        <Section title='非剖切' sub open={false} />
      </Section>
      <Section title='预览' open={false} />
      <DialogFoot>
        <Collapse type='button'><CaretUp /></Collapse>
        <CloseButton type='button'>关闭</CloseButton>
      </DialogFoot>
    </DialogBody>
  </Dialog>
);

const InputMethodBar = () => (
  <ImeBar>
    <ImeLogo width='32' height='30' viewBox='0 0 32 30'>
      <path d='M1 5l25-5 6 23-25 8z' fill='#f0561d' />
      <path d='M24 7C14 5 9 8 10 12c1 4 13 1 13 6 0 4-8 5-14 3' fill='none' stroke='#fff' strokeWidth='4' />
    </ImeLogo>
    <ImeLang>英</ImeLang>
    <Ico stroke='none' fill='currentColor'><circle cx='4' cy='5' r='2' /><path d='M10 8h3c1 4-1 6-3 7 1-2 1-3 0-4z' /></Ico>
    <Ico fill='currentColor' stroke='none'><path d='M5 3c0-4 6-4 6 0v5c0 4-6 4-6 0zM2 7h2c0 6 8 6 8 0h2c0 4-2 6-5 6v3H7v-3c-3 0-5-2-5-6z' /></Ico>
    <Ico strokeWidth='1.500'><path d='M1 2.500h14v11H1z' /><path d='M3 5.500h10M3 8h10' strokeDasharray='2 1' /><path d='M5 11h6' /></Ico>
    <Ico w={16} vb='0 0 18 18' stroke='none'>
      <defs><linearGradient id='shirt'><stop offset='0' stopColor='#f0559a' /><stop offset='.5' stopColor='#8f6bf5' /><stop offset='1' stopColor='#37b6ff' /></linearGradient></defs>
      <path d='M0 7l4-4c2 2 6 2 8 0l4 4-3 2v8H4V9L3 10z' fill='url(#shirt)' /><circle cx='16' cy='1' r='3' fill='#f4512c' />
    </Ico>
    <Ico fill='currentColor' stroke='none'><path d='M3 2h10c3 1 3 5 2 8l1 5h-3l-2-4H5l-2 4H0l1-5C0 7 0 3 3 2z' /><path d='M5 4v4M3 6h4M9 7h2M11 5h2' stroke='#fff' /></Ico>
    <Ico fill='currentColor' stroke='none'><rect x='1' y='2' width='6' height='6' rx='1' /><rect x='9' y='2' width='6' height='6' rx='3' /><rect x='1' y='9' width='6' height='6' rx='1' /><rect x='9' y='9' width='6' height='6' rx='1' /></Ico>
    <Ico fill='currentColor' stroke='none'><path d='M8 0l2 3 4 0-1 4 2 2-2 2 1 3-4 0-2 2-2-2-4 0 1-3-2-2 2-2-1-4 4 0z' /><path d='M8 7v7M5.500 10c-1-5 6-5 5 0' stroke='#fff' strokeWidth='1.500' fill='none' /></Ico>
  </ImeBar>
);

const App = () => (
  <Page>
    <GlobalStyle />
    <AppHeader />
    <AppRibbon />
    <SelectionRow />
    <Work>
      <LeftRail />
      <PartNavigator />
      <Graphics>
        <SheetTabs />
        <Sheet><Drawing /></Sheet>
        <SnapBar>
          <Ico w={21} stroke='#333'>
            <circle cx='10.500' cy='10.500' r='9' /><path d='M10.500 0v6M10.500 15v6M0 10.500h6M15 10.500h6M8 4l2.500 2L13 4M8 17l2.500-2 2.500 2M4 8l2 2.500L4 13M17 8l-2 2.500 2 2.500' />
            <circle cx='10.500' cy='10.500' r='3' fill={ORANGE} stroke='none' />
          </Ico>
          <Caret />
          <SnapMore><Caret /></SnapMore>
        </SnapBar>
      </Graphics>
    </Work>
    <StatusBar>指定放置视图的位置</StatusBar>
    <InputMethodBar />
    <Watermark>CSDN @山涧果子</Watermark>
    <SectionDialog />
  </Page>
);

export default App;
